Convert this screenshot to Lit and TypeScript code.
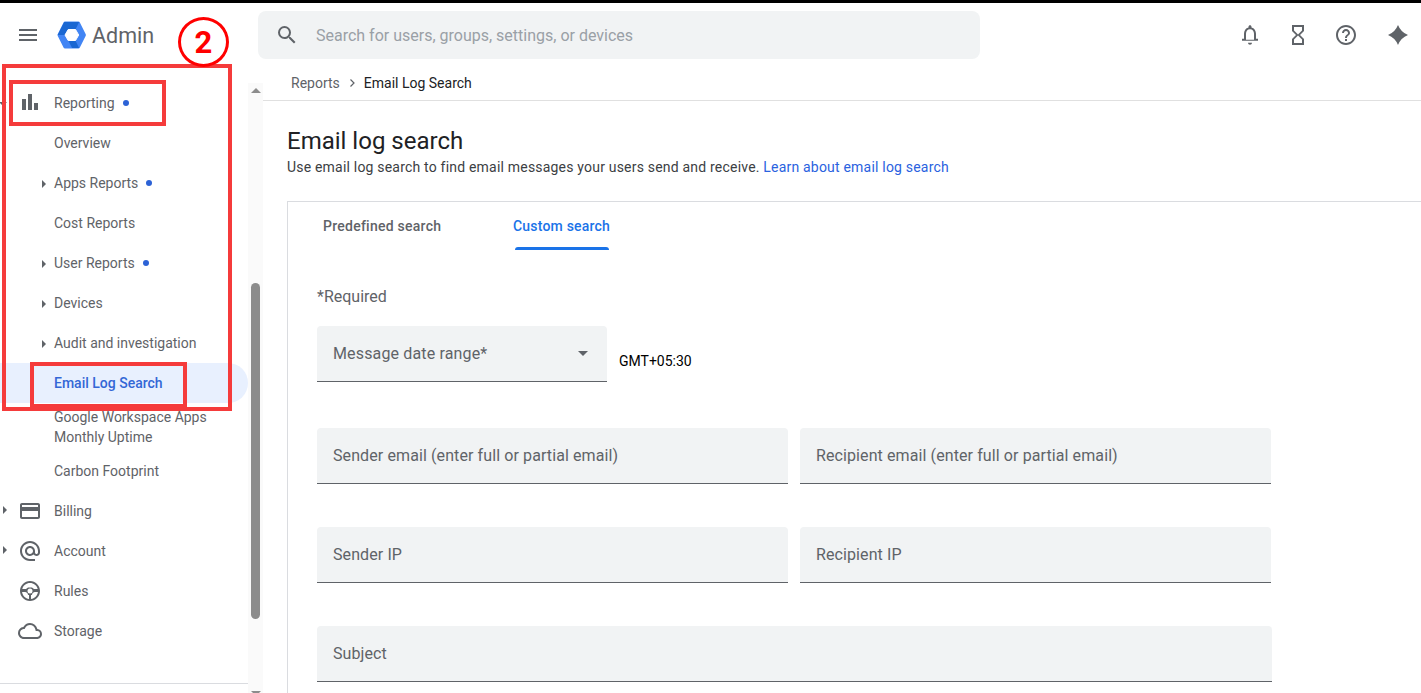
import { LitElement, html, css, svg } from "lit";
import { customElement } from "lit/decorators.js";

const G = "#5f6368";
const ic = (inner: unknown, size = 24, fill = G) => html`<svg width=${size} height=${size} viewBox="0 0 24 24" fill=${fill}>${inner}</svg>`;
const icons = {
  menu: svg`<path d="M3 18h18v-2H3v2zm0-5h18v-2H3v2zm0-7v2h18V6H3z"/>`,
  search: svg`<path d="M15.5 14h-.79l-.28-.27A6.47 6.47 0 0 0 16 9.5 6.5 6.5 0 1 0 9.5 16c1.61 0 3.09-.59 4.23-1.57l.27.28v.79l5 4.99L20.49 19l-4.99-5zm-6 0C7.01 14 5 11.99 5 9.5S7.01 5 9.5 5 14 7.01 14 9.5 11.99 14 9.5 14z"/>`,
  bell: svg`<path d="M12 22c1.1 0 2-.9 2-2h-4c0 1.1.9 2 2 2zm6-6v-5c0-3.07-1.63-5.64-4.5-6.32V4c0-.83-.67-1.5-1.5-1.5s-1.5.67-1.5 1.5v.68C7.64 5.36 6 7.92 6 11v5H4v2h16v-2h-2zm-2 1H8v-6c0-2.48 1.51-4.5 4-4.5s4 2.02 4 4.5v6z" transform="translate(0 -.2)"/>`,
  hourglass: svg`<path d="M6 2v6h.01L6 8.01 10 12l-4 4 .01.01H6V22h12v-5.99h-.01L18 16l-4-4 4-3.99-.01-.01H18V2H6zm10 14.5V20H8v-3.5l4-4 4 4zm-4-5-4-4V4h8v3.5l-4 4z"/>`,
  help: svg`<path d="M11 18h2v-2h-2v2zm1-16C6.48 2 2 6.48 2 12s4.48 10 10 10 10-4.48 10-10S17.52 2 12 2zm0 18c-4.41 0-8-3.59-8-8s3.59-8 8-8 8 3.59 8 8-3.59 8-8 8zm0-14c-2.21 0-4 1.79-4 4h2c0-1.1.9-2 2-2s2 .9 2 2c0 2-3 1.75-3 5h2c0-2.25 3-2.5 3-5 0-2.21-1.79-4-4-4z"/>`,
  spark: svg`<path d="M12 2Q14.8 9.2 22 12 14.8 14.8 12 22 9.2 14.8 2 12 9.2 9.2 12 2z"/>`,
  bars: svg`<path d="M4 8h4v11H4zM10 3h4v16h-4zM16 12h4v7h-4z"/>`,
  card: svg`<path d="M20 4H4c-1.11 0-2 .89-2 2v12c0 1.11.89 2 2 2h16c1.11 0 2-.89 2-2V6c0-1.11-.89-2-2-2zm0 14H4v-6h16v6zm0-10H4V6h16v2z"/>`,
  at: svg`<path d="M12 2C6.48 2 2 6.48 2 12s4.48 10 10 10h5v-2h-5c-4.34 0-8-3.66-8-8s3.66-8 8-8 8 3.66 8 8v1.43c0 .79-.71 1.57-1.5 1.57s-1.5-.78-1.5-1.57V12c0-2.76-2.24-5-5-5s-5 2.24-5 5 2.24 5 5 5c1.38 0 2.64-.56 3.54-1.47.65.89 1.77 1.47 2.96 1.47 1.97 0 3.5-1.6 3.5-3.57V12c0-5.52-4.48-10-10-10zm0 13c-1.66 0-3-1.34-3-3s1.34-3 3-3 3 1.34 3 3-1.34 3-3 3z"/>`,
  wheel: svg`<path d="M12 2C6.48 2 2 6.48 2 12s4.48 10 10 10 10-4.48 10-10S17.52 2 12 2zm-1 17.93c-3.61-.45-6.48-3.32-6.93-6.93H7c1.66 0 3 1.34 3 3h1v3.93zM12 14.5a2.5 2.5 0 1 1 0-5 2.5 2.5 0 0 1 0 5zm1 5.43V16h1c0-1.66 1.34-3 3-3h2.93c-.45 3.61-3.32 6.48-6.93 6.93zM4.26 10C5.13 6.55 8.27 4 12 4s6.87 2.55 7.74 6H16l-2-1.5h-4L8 10H4.26z"/>`,
  cloud: svg`<path d="M19.35 10.04A7.49 7.49 0 0 0 12 4C9.11 4 6.6 5.64 5.35 8.04A5.994 5.994 0 0 0 0 14c0 3.31 2.69 6 6 6h13c2.76 0 5-2.24 5-5 0-2.64-2.05-4.78-4.65-4.96zM19 18H6c-2.21 0-4-1.79-4-4 0-2.05 1.53-3.76 3.56-3.97l1.07-.11.5-.95A5.469 5.469 0 0 1 12 6c2.62 0 4.88 1.86 5.39 4.43l.3 1.5 1.53.11A2.98 2.98 0 0 1 22 15c0 1.65-1.35 3-3 3z"/>`,
};

type Row = { label: string; icon?: keyof typeof icons; caret?: "sub" | "top"; dot?: boolean; active?: boolean; tall?: boolean };
const rows: Row[] = [
  { label: "Reporting", icon: "bars", dot: true },
  { label: "Overview" },
  { label: "Apps Reports", caret: "sub", dot: true },
  { label: "Cost Reports" },
  { label: "User Reports", caret: "sub", dot: true },
  { label: "Devices", caret: "sub" },
  { label: "Audit and investigation", caret: "sub" },
  { label: "Email Log Search", active: true },
  { label: "Google Workspace Apps Monthly Uptime", tall: true },
  { label: "Carbon Footprint" },
  { label: "Billing", icon: "card", caret: "top" },
  { label: "Account", icon: "at", caret: "top" },
  { label: "Rules", icon: "wheel" },
  { label: "Storage", icon: "cloud" },
];

@customElement("app-root")
export class AppRoot extends LitElement {
  static styles = css`
    :host { display: block; width: 1421px; height: 693px; overflow: hidden; position: relative; background: #fff; font-family: Roboto, "Liberation Sans", sans-serif; color: #5f6368; }
    .topline { height: 3px; background: #000; }
    header { height: 64px; display: flex; align-items: center; box-sizing: border-box; }
    .menu { margin-left: 16px; width: 24px; height: 24px; }
    .logo { margin-left: 17px; width: 32px; height: 32px; }
    .admin { margin-left: 3px; font-size: 21.5px; color: #5f6368; width: 166px; }
    .search { width: 722px; height: 48px; background: #f1f3f4; border-radius: 8px; display: flex; align-items: center; padding-left: 17px; box-sizing: border-box; font-size: 16px; color: #9aa0a6; gap: 17px; }
    .actions { display: flex; margin-left: 258px; gap: 24px; }
    .actions svg { display: block; }
    .actions svg:last-child { margin-left: 4px; }
    .body { display: flex; height: 626px; }
    .side { width: 248px; flex: none; padding-top: 16px; box-sizing: border-box; position: relative; }
    .row { height: 40px; display: flex; align-items: center; font-size: 14px; color: #5f6368; position: relative; padding-left: 54px; box-sizing: border-box; border-radius: 0 20px 20px 0; }
    .row.tall { height: 48px; line-height: 20px; }
    .row.tall span { width: 170px; }
    .row.active { background: #e8f0fe; color: #3367d6; font-weight: 500; }
    .row svg.i { position: absolute; left: 18px; top: 8px; }
    .car { position: absolute; width: 0; height: 0; border-left: 4px solid #5f6368; border-top: 4px solid transparent; border-bottom: 4px solid transparent; top: 15px; }
    .car.sub { left: 42px; }
    .car.top { left: 3px; }
    .car.down { left: -1px; top: 19px; border: 4px solid transparent; border-top-color: #5f6368; border-bottom: 0; }
    .dot { width: 6px; height: 6px; border-radius: 50%; background: #2c62d6; margin-left: 8px; }
    .sideline { position: absolute; left: 0; width: 248px; top: 616px; height: 1px; background: #dadce0; }
    .scroll { width: 15px; flex: none; background: #fafafa; position: relative; margin-top: 16px; }
    .thumb { position: absolute; left: 3px; width: 9px; top: 200px; height: 336px; border-radius: 5px; background: #8c8c8c; }
    .aup, .adown { position: absolute; left: 3px; width: 0; height: 0; border-left: 5px solid transparent; border-right: 5px solid transparent; }
    .aup { top: 5px; border-bottom: 5px solid #8c8c8c; }
    .adown { bottom: -3px; border-top: 5px solid #8c8c8c; }
    main { flex: 1; min-width: 0; }
    .crumb { height: 34px; border-bottom: 1px solid #e0e0e0; display: flex; align-items: center; padding: 0 0 2px 28px; font-size: 14px; color: #5f6368; box-sizing: border-box; }
    .crumb b { font-weight: 400; color: #202124; }
    .crumb svg { margin: 0 6px; }
    .content { padding: 26px 0 0 24px; }
    h1 { margin: 0; font-size: 24px; font-weight: 400; color: #202124; line-height: 28px; }
    .sub { font-size: 14px; color: #3c4043; line-height: 20px; margin-top: 2px; letter-spacing: .2px; }
    .sub a { color: #2a62e0; text-decoration: none; }
    .panel { margin-top: 24px; border: 1px solid #dadce0; border-right: 0; border-bottom: 0; height: 520px; padding-left: 29px; box-sizing: border-box; }
    .tabs { display: flex; height: 48px; font-size: 14px; font-weight: 500; color: #5f6368; letter-spacing: .25px; }
    .tab { position: relative; padding-left: 6px; line-height: 48px; height: 48px; }
    .tab.first { width: 184px; }
    .tab.on { color: #1a73e8; letter-spacing: .2px; }
    .tab.on::after { content: ""; position: absolute; left: 8px; bottom: 0; width: 94px; height: 3px; background: #1a73e8; border-radius: 3px 3px 0 0; }
    .req { font-size: 16px; color: #5f6368; margin-top: 37px; line-height: 20px; }
    .f { height: 56px; background: #f1f3f4; border-radius: 4px 4px 0 0; border-bottom: 1px solid #5f6368; box-sizing: border-box; display: flex; align-items: center; padding-left: 16px; font-size: 16px; color: #5f6368; letter-spacing: .1px; }
    .daterow { display: flex; margin-top: 19px; }
    .date { width: 290px; position: relative; letter-spacing: .15px; }
    .date i { position: absolute; right: 19px; top: 25px; width: 0; height: 0; border: 5px solid transparent; border-top-color: #5f6368; border-bottom: 0; }
    .gmt { font-size: 14px; color: #000; margin: 25px 0 0 12px; line-height: 20px; }
    .two { display: grid; grid-template-columns: 471px 471px; gap: 12px; margin-top: 43px; }
    .daterow + .two { margin-top: 46px; }
    .one { width: 955px; margin-top: 43px; }
    .an { position: absolute; box-sizing: border-box; border: 4px solid #f53b3b; }
    .a1 { left: 2px; top: 64px; width: 230px; height: 347px; }
    .a2 { left: 9px; top: 80px; width: 157px; height: 46px; }
    .a3 { left: 30px; top: 362px; width: 157px; height: 46px; }
    .circle { position: absolute; left: 178px; top: 17px; width: 51px; height: 50px; box-sizing: border-box; border: 3px solid #f00; border-radius: 50%; color: #f00; font-size: 31px; font-weight: 700; display: flex; align-items: center; justify-content: center; font-family: Roboto, sans-serif; }
  `;

  render() {
    return html`
      <div class="topline"></div>
      <header>
        <div class="menu">${ic(icons.menu)}</div>
        <svg class="logo" viewBox="0 0 32 32" stroke-linejoin="round">
          <path d="M2 16 8 4h13.4l6 12-6 12H8z" fill="#4285f4" stroke="#4285f4" stroke-width="3"/>
          <path d="M.7 16 7.3 3h14.8l-3.6 7.5h-7.3L8 16z" fill="#1a67d2"/>
          <path d="M11.2 21.5h7.3l3.6 7.5-7 0z" fill="#1a67d2"/>
          <path d="M8 16l3.2-5.5h7.3L21.7 16l-3.2 5.5h-7.3z" fill="#fff" stroke="#fff" stroke-width="1"/>
        </svg>
        <div class="admin">Admin</div>
        <div class="search">${ic(icons.search)}<span>Search for users, groups, settings, or devices</span></div>
        <div class="actions">${ic(icons.bell)}${ic(icons.hourglass)}${ic(icons.help)}${ic(icons.spark)}</div>
      </header>
      <div class="body">
        <nav class="side">
          ${rows.map((r, i) => html`
            <div class="row ${r.active ? "active" : ""} ${r.tall ? "tall" : ""}">
              ${i === 0 ? html`<div class="car down"></div>` : ""}
              ${r.caret ? html`<div class="car ${r.caret}"></div>` : ""}
              ${r.icon ? html`<svg class="i" width="24" height="24" viewBox="0 0 24 24" fill=${G}>${icons[r.icon]}</svg>` : ""}
              <span>${r.label}</span>
              ${r.dot ? html`<div class="dot"></div>` : ""}
            </div>`)}
          <div class="sideline"></div>
        </nav>
        <div class="scroll"><div class="aup"></div><div class="thumb"></div><div class="adown"></div></div>
        <main>
          <div class="crumb">Reports
            <svg width="12" height="12" viewBox="0 0 12 12" fill="none" stroke="#5f6368" stroke-width="1.2"><path d="M4.5 2.5 8 6l-3.5 3.5"/></svg>
            <b>Email Log Search</b></div>
          <div class="content">
            <h1>Email log search</h1>
            <div class="sub">Use email log search to find email messages your users send and receive. <a>Learn about email log search</a></div>
            <div class="panel">
              <div class="tabs"><div class="tab first">Predefined search</div><div class="tab on">Custom search</div></div>
              <div class="req">*Required</div>
              <div class="daterow"><div class="f date">Message date range*<i></i></div><div class="gmt">GMT+05:30</div></div>
              <div class="two"><div class="f">Sender email (enter full or partial email)</div><div class="f">Recipient email (enter full or partial email)</div></div>
              <div class="two"><div class="f">Sender IP</div><div class="f">Recipient IP</div></div>
              <div class="f one">Subject</div>
            </div>
          </div>
        </main>
      </div>
      <div class="an a1"></div><div class="an a2"></div><div class="an a3"></div>
      <div class="circle">2</div>
    `;
  }
}
